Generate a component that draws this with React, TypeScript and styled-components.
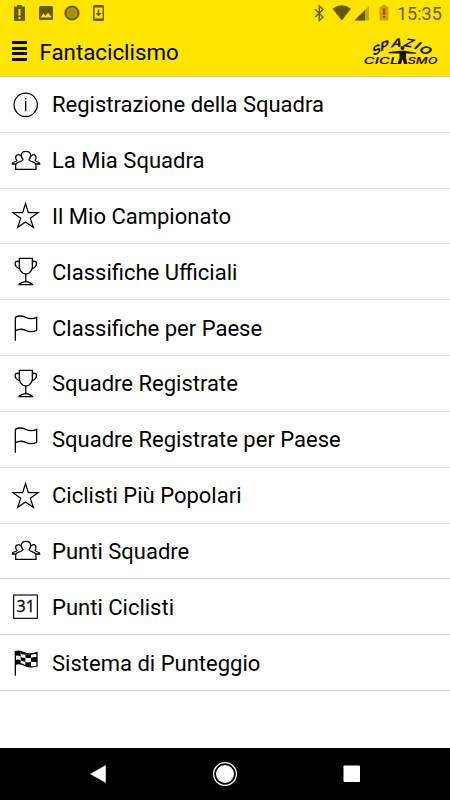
import React from "react";
import styled, { createGlobalStyle } from "styled-components";

const GlobalStyle = createGlobalStyle`
  * { box-sizing: border-box; }
  body { margin: 0; background: #fff; font-family: Roboto, sans-serif; color: #000; }
`;

const Screen = styled.div`
  display: flex;
  flex-direction: column;
  width: 450px;
  height: 800px;
  overflow: hidden;
  background: #fff;
`;

const StatusBar = styled.div`
  display: flex;
  justify-content: space-between;
  flex: none;
  height: 27px;
  background: #ffe400;
`;

const StatusGroup = styled.div`
  display: flex;
`;

const Clock = styled.time`
  width: 53px;
  font-size: 18px;
  line-height: 28px;
  color: #665b00;
  white-space: nowrap;
`;

const TitleBar = styled.header`
  display: flex;
  align-items: center;
  flex: none;
  height: 50px;
  padding: 0 5px 0 12px;
  background: #ffe400;
  border-bottom: 1.5px solid #cfcbb4;
`;

const MenuButton = styled.button`
  display: flex;
  flex-direction: column;
  gap: 2.4px;
  width: 15px;
  padding: 0;
  margin: -1px 12.5px 0 0;
  border: 0;
  background: none;
`;

const MenuLine = styled.span`
  height: 3px;
  background: #0d0c00;
`;

const Title = styled.h1`
  flex: 1;
  margin: 0;
  font-size: 22.3px;
  font-weight: 400;
  line-height: 30px;
`;

const MenuList = styled.ul`
  flex: 1;
  margin: 0;
  padding: 0;
  list-style: none;
`;

const MenuRow = styled.li`
  display: flex;
  align-items: center;
  height: 55.83px;
  padding: 0.8px 0 0 11px;
  gap: 11px;
  border-bottom: 1px solid #d6d6d6;
  font-size: 22.03px;
  white-space: nowrap;
`;

const RowIcon = styled.svg`
  flex: none;
  width: 30px;
  height: 30px;
  fill: none;
  stroke: #000;
  stroke-width: 3.8;
`;

const NavBar = styled.nav`
  display: flex;
  align-items: center;
  justify-content: space-between;
  flex: none;
  height: 52px;
  padding: 0 86px;
  background: #000;
`;

const NavIcon = styled.svg`
  width: 26px;
  height: 26px;
  fill: #fff;
`;

type IconName = "info" | "team" | "star" | "cup" | "flag" | "calendar" | "finish";

const cells = [
  "M13 10Q22 9 29 13V26Q22 22 13 23Z",
  "M43 17Q51 20 60 17V29Q52 31 43 29Z",
  "M29 26Q36 30 43 30V42Q36 41 29 37Z",
  "M60 29Q69 25 78 28V43Q69 40 60 42Z",
  "M13 36Q22 32 29 37V49Q22 46 13 48Z",
  "M43 42Q51 44 60 42V54Q51 56 43 53Z",
  "M29 13Q36 12 43 17V20Q36 20 29 17Z",
  "M60 17Q69 13 78 15V19Q69 17 60 20Z",
];

const drawings: Record<IconName, React.ReactNode> = {
  info: (
    <>
      <circle cx="44" cy="44.5" r="35" />
      <path d="M44 34V64M44 24V28.5" strokeWidth="4" />
    </>
  ),
  team: (
    <>
      <path d="M14 70V57Q15 50 27 47Q34 45 36 41Q31 35 31 27Q32 16 45 16Q58 16 59 27Q59 35 54 41Q56 45 63 47Q74 50 75 57V70Z" />
      <path d="M29 31Q27 25 21 26Q14 27 14 35Q14 39 18 43Q15 47 9 48Q4 49 4 54H14" />
      <path d="M61 31Q63 25 69 26Q75 27 75 35Q75 39 72 43Q74 47 80 48Q86 49 86 54H75" />
    </>
  ),
  star: <path d="M43.500 8L52 35H81L58 52L67 79L43.500 63L20 79L29 52L6 35H35Z" />,
  cup: (
    <>
      <path d="M25 4H64V32Q63 42 54 48L44.500 51L35 48Q26 42 25 32Z" />
      <path d="M25 15Q20 11 14 14Q10 22 16 29L26 36M64 15Q69 11 75 14Q79 22 73 29L63 36" />
      <path d="M44.500 51V74M24 83Q28 77 44.500 74Q61 77 65 83Z" />
    </>
  ),
  flag: (
    <path d="M13 83V13Q28 5 44 13Q61 21 77 13V52Q61 60 44 52Q28 45 13 53" />
  ),
  calendar: (
    <>
      <rect x="8" y="9" width="71" height="70" strokeWidth="3.4" />
      <text
        x="44"
        y="60"
        fontFamily="Open Sans, sans-serif"
        fontSize="48"
        textAnchor="middle"
        fill="#000"
        strokeWidth="0.800"
      >
        31
      </text>
    </>
  ),
  finish: (
    <>
      <path d="M13 83V11Q26 6 39 14Q55 22 78 14V54Q57 60 43 53Q27 43 13 49" />
      {cells.map((d) => (
        <path key={d} d={d} fill="#000" stroke="none" />
      ))}
    </>
  ),
};

const items: { icon: IconName; label: string }[] = [
  { icon: "info", label: "Registrazione della Squadra" },
  { icon: "team", label: "La Mia Squadra" },
  { icon: "star", label: "Il Mio Campionato" },
  { icon: "cup", label: "Classifiche Ufficiali" },
  { icon: "flag", label: "Classifiche per Paese" },
  { icon: "cup", label: "Squadre Registrate" },
  { icon: "flag", label: "Squadre Registrate per Paese" },
  { icon: "star", label: "Ciclisti Più Popolari" },
  { icon: "team", label: "Punti Squadre" },
  { icon: "calendar", label: "Punti Ciclisti" },
  { icon: "finish", label: "Sistema di Punteggio" },
];

const arch = [
  { char: "S", x: 22.5, y: 22.8, turn: -30 },
  { char: "P", x: 30, y: 18.8, turn: -22 },
  { char: "A", x: 41, y: 16, turn: -5 },
  { char: "Z", x: 52.5, y: 16, turn: 8 },
  { char: "I", x: 60.5, y: 18.3, turn: 20 },
  { char: "O", x: 68, y: 22.3, turn: 25 },
];

const LogoSvg = styled.svg`
  flex: none;
  width: 90px;
  height: 40px;
  margin-top: -1.5px;
  font-family: Inter, sans-serif;
  font-weight: 700;
  font-style: italic;
  fill: #171400;
`;

const Logo = () => (
  <LogoSvg viewBox="0 0 90 40">
    {arch.map(({ char, x, y, turn }) => (
      <text
        key={char}
        transform={`translate(${x} ${y}) rotate(${turn}) skewX(-14) scale(1.250 1)`}
        fontSize="11.500"
        textAnchor="middle"
      >
        {char}
      </text>
    ))}
    <text transform="translate(8.500 33)" fontSize="9.200" fontWeight="600" textLength="35" lengthAdjust="spacingAndGlyphs">
      CICL
    </text>
    <text transform="translate(52.500 33)" fontSize="9.200" fontWeight="600" textLength="30" lengthAdjust="spacingAndGlyphs">
      SMO
    </text>
    <circle cx="47.500" cy="17" r="2" />
    <path d="M33.500 21L45 19.800H50L61 21.700V22.800L51 22.500V27L52.500 33H49L47.500 28L46 33H42.500L44.500 27V22.500L33.500 22.300Z" />
  </LogoSvg>
);

const StatusIcons = () => (
  <svg width="112" height="27" fill="#665b00">
    <path d="M14 6.500H17V5H22V6.500H25V21H14Z" />
    <path d="M18.500 9H20.500V15.500H18.500ZM18.500 17H20.500V19H18.500Z" fill="#ffe400" />
    <rect x="39" y="6" width="14" height="14" rx="1.500" />
    <path d="M40.500 17.500L43.500 13.500L45.500 16L48 12.500L51.500 17.500Z" fill="#ffe400" />
    <circle cx="72" cy="13" r="7.600" />
    <circle cx="72" cy="13" r="4.800" fill="#a39200" stroke="#b8a500" strokeWidth="1.200" />
    <path
      d="M95 5H102.500Q104 5 104 6.500V19.500Q104 21 102.500 21H94.500Q93 21 93 19.500V6.500Q93 5 94.500 5ZM94.500 7.500V18.500H102.500V7.500Z"
      fillRule="evenodd"
    />
    <path d="M97.700 9.500H99.300V13H101.500L98.500 16.500L95.500 13H97.700Z" />
  </svg>
);

const SystemIcons = () => (
  <svg width="85" height="27" fill="#665b00">
    <path
      d="M3 9.200L11 17L7.300 20.500V6L11 9.500L3 17.200"
      fill="none"
      stroke="#665b00"
      strokeWidth="1.400"
    />
    <path d="M20.500 8.700Q29.800 1.800 39 8.700L29.800 20.500Z" />
    <path d="M57 6V20.500H42.500Z" fill="#bfab00" />
    <path d="M53 10V20.500H42.500Z" />
    <path d="M67.500 6.500H70V5H74V6.500H76.500V20.500H67.500Z" fill="#bfab00" />
    <path d="M71 8.500H73.200V15H71ZM71 16H73.200V18H71Z" fill="#ff1a00" />
  </svg>
);

export default function App() {
  return (
    <>
      <GlobalStyle />
      <Screen>
        <StatusBar>
          <StatusGroup>
            <StatusIcons />
          </StatusGroup>
          <StatusGroup>
            <SystemIcons />
            <Clock>15:35</Clock>
          </StatusGroup>
        </StatusBar>
        <TitleBar>
          <MenuButton aria-label="Menu">
            <MenuLine />
            <MenuLine />
            <MenuLine />
            <MenuLine />
          </MenuButton>
          <Title>Fantaciclismo</Title>
          <Logo />
        </TitleBar>
        <MenuList>
          {items.map(({ icon, label }) => (
            <MenuRow key={label}>
              <RowIcon viewBox="0 0 90 90">{drawings[icon]}</RowIcon>
              {label}
            </MenuRow>
          ))}
        </MenuList>
        <NavBar>
          <NavIcon viewBox="0 0 26 26">
            <path d="M4.500 13L19.500 4.500V21.500Z" stroke="#fff" strokeWidth="0.500" strokeLinejoin="round" />
          </NavIcon>
          <NavIcon viewBox="0 0 26 26">
            <circle cx="13" cy="13" r="11.400" fill="none" stroke="#fff" strokeWidth="1.300" />
            <circle cx="13" cy="13" r="9" />
          </NavIcon>
          <NavIcon viewBox="0 0 26 26">
            <rect x="5.500" y="4.500" width="16.500" height="16.500" rx="0.800" />
          </NavIcon>
        </NavBar>
      </Screen>
    </>
  );
}
